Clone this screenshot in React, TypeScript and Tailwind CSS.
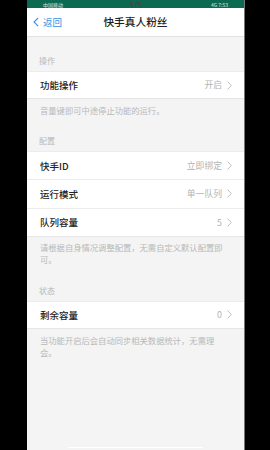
const FONT = { fontFamily: '"Noto Sans CJK SC", "Noto Sans", sans-serif' }

type Row = { label: string; value: string }

function Chevron() {
  return (
    <svg width="5" height="9" viewBox="0 0 5 9" className="ml-[5px] shrink-0">
      <polyline points="0.6,0.6 4.3,4.5 0.6,8.4" fill="none" stroke="#bdbdbd" strokeWidth="1" />
    </svg>
  )
}

function SectionLabel({ text, h }: { text: string; h: string }) {
  return (
    <div className={`${h} flex items-end pb-[6px] pl-[12px] text-[8px] leading-[8px] text-[#b8b8b8]`}>
      {text}
    </div>
  )
}

function Rows({ rows, h }: { rows: Row[]; h: string }) {
  return (
    <div className="bg-white border-t border-[#ececec]">
      {rows.map((r, i) => (
        <div
          key={r.label}
          className={`${h} flex items-center pl-[13px] pr-[12px] ${i < rows.length - 1 ? 'border-b border-[#ececec]' : 'border-b border-[#e6e6e6]'}`}
        >
          <span className="text-[9.5px] text-[#222] font-medium">{r.label}</span>
          <span className="ml-auto text-[8.8px] text-[#b3b3b3]">{r.value}</span>
          <Chevron />
        </div>
      ))}
    </div>
  )
}

// 折り返し位置は参照画像に合わせて固定
function Note({ lines, pt }: { lines: string[]; pt: string }) {
  return (
    <div className={`${pt} pl-[13px] text-[8.3px] leading-[12px] text-[#b8b8b8] whitespace-nowrap`}>
      {lines.map(l => (
        <div key={l}>{l}</div>
      ))}
    </div>
  )
}

export default function App() {
  return (
    <div className="w-[270px] h-[450px] bg-black flex" style={FONT}>
      <div className="ml-[27px] w-[218px] h-full bg-[#f4f4f4] border-r border-[#777] relative flex flex-col">
        {/* status bar */}
        <div className="h-[8px] bg-[#0d6a52] flex items-center px-[16px] text-[5px] leading-[5px] text-white/80">
          <span>中国移动</span>
          <span className="ml-auto">4G 7:53</span>
        </div>
        <div className="absolute left-0 right-0 top-[1px] text-center text-[9px] leading-[9px] text-[#444]">3/5</div>

        {/* nav */}
        <div className="h-[29px] bg-white border-b border-[#e2e2e2] flex items-center relative">
          <div className="flex items-center pl-[6px] text-[#3b8fe0]">
            <svg width="6" height="10" viewBox="0 0 6 10">
              <polyline points="5.2,0.8 1,5 5.2,9.2" fill="none" stroke="#3b8fe0" strokeWidth="1.1" />
            </svg>
            <span className="ml-[4px] text-[9.5px]">返回</span>
          </div>
          <div className="absolute inset-0 flex items-center justify-center text-[10.7px] text-[#222] font-medium">
            快手真人粉丝
          </div>
        </div>

        <SectionLabel text="操作" h="h-[34px]" />
        <Rows h="h-[27px]" rows={[{ label: '功能操作', value: '开启' }]} />
        <Note pt="pt-[5px]" lines={['音量键即可中途停止功能的运行。']} />

        <SectionLabel text="配置" h="h-[35px]" />
        <Rows
          h="h-[28.3px]"
          rows={[
            { label: '快手ID', value: '立即绑定' },
            { label: '运行模式', value: '单一队列' },
            { label: '队列容量', value: '5' },
          ]}
        />
        <Note pt="pt-[4px]" lines={['请根据自身情况调整配置，无需自定义默认配置即', '可。']} />

        <SectionLabel text="状态" h="h-[36px]" />
        <Rows h="h-[27px]" rows={[{ label: '剩余容量', value: '0' }]} />
        <Note pt="pt-[5px]" lines={['当功能开启后会自动同步相关数据统计，无需理', '会。']} />

        <div className="mt-auto mb-[2px] mx-auto w-[135px] h-[1px] bg-white" />
      </div>
    </div>
  )
}
